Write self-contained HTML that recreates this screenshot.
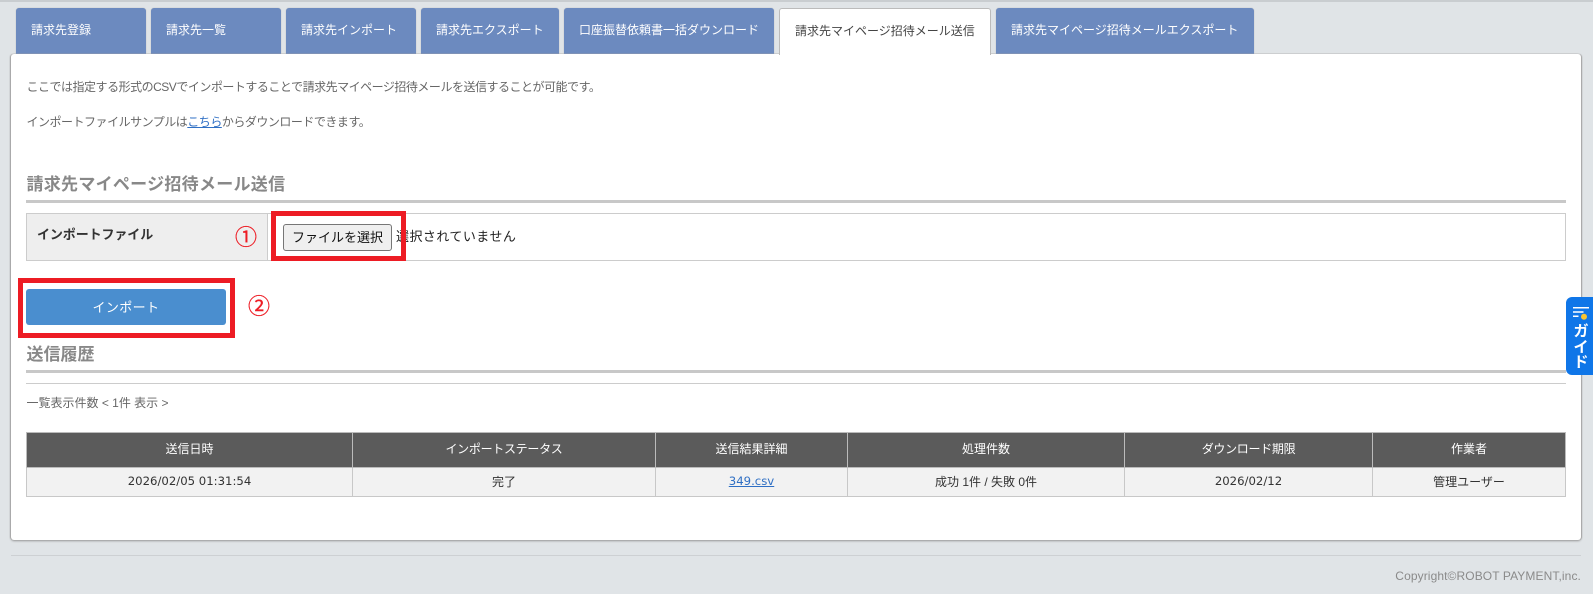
<!DOCTYPE html>
<html lang="ja"><head><meta charset="utf-8"><title>請求先マイページ招待メール送信</title>
<style>
*{box-sizing:border-box}
html,body{margin:0;padding:0;width:1593px;height:594px;overflow:hidden;background:#e0e4e7;font-family:"Liberation Sans","Noto Sans CJK JP",sans-serif;font-size:12px;color:#666}
.a{position:absolute;white-space:nowrap}
#top{left:0;top:0;width:1593px;height:2px;background:#c9cdd0}
.tab{position:absolute;top:8px;height:46px;background:#6c8abf;color:#fff;border-radius:3px 3px 0 0;padding:13.5px 0 0 15px;line-height:17px;white-space:nowrap;box-shadow:0 0 1px #aaa}
.tab.on{background:#fff;color:#444;height:47px;border:1px solid #bbb;border-bottom:0;padding:13.5px 0 0 15px;z-index:3;box-shadow:none}
#panel{left:11px;top:54px;width:1570px;height:486px;background:#fff;border-radius:3px;box-shadow:0 1px 2px 0 #999,-1px 0 1px 0 #aaa,1px 0 1px 0 #aaa;z-index:2}
.c{z-index:4}
.h{font-size:17px;font-weight:bold;color:#888;line-height:22px}
.rule{left:26px;width:1540px;height:3px;background:#c8c8c8}
.red{border:5px solid #ed1c24;z-index:5}
.num{color:#ed1c24;font-size:22px;line-height:26px;z-index:5;-webkit-text-stroke:.3px #ed1c24}
#cols{left:26px;top:432px;width:1539px;height:64px;border-collapse:collapse;table-layout:fixed}
#cols th{background:#5b5b5b;color:#fff;font-weight:normal;height:35px;border:1px solid #bbb;padding:0 0 3px;font-size:12px}
#cols th.k{letter-spacing:-.3px}
#cols td{background:#f2f2f2;color:#333;height:29px;border:1px solid #c8c8c8;padding:0 0 2px;text-align:center;font-size:12px}
#cols td.n{font-family:"DejaVu Sans","Noto Sans CJK JP",sans-serif;font-size:11.7px}
a{color:#2f6fc4}
#fb{left:283px;top:224px;width:109px;height:27px;background:#efefef;border:1px solid #767676;border-radius:3px;color:#111;font-size:13px;line-height:25px;text-align:center}
#guide{left:1566px;top:297px;width:27px;height:78px;background:#0f76e8;border-radius:6px 0 0 6px;z-index:6}
.g{left:1566px;width:30px;color:#fff;font-weight:bold;font-size:15px;line-height:16px;text-align:center;z-index:7}
</style></head><body>
<div class="a" id="top"></div>
<div class="tab" style="left:16px;width:130px">請求先登録</div>
<div class="tab" style="left:151px;width:130px">請求先一覧</div>
<div class="tab" style="left:286px;width:130px">請求先インポート</div>
<div class="tab" style="left:421px;width:138px">請求先エクスポート</div>
<div class="tab" style="left:564px;width:210px">口座振替依頼書一括ダウンロード</div>
<div class="tab on" style="left:779px;width:212px">請求先マイページ招待メール送信</div>
<div class="tab" style="left:996px;width:258px">請求先マイページ招待メールエクスポート</div>
<div class="a" id="panel"></div>

<div class="a c" style="left:26.5px;top:79px;line-height:17px;letter-spacing:-.49px">ここでは指定する形式のCSVでインポートすることで請求先マイページ招待メールを送信することが可能です。</div>
<div class="a c" style="left:26.5px;top:114px;line-height:17px;letter-spacing:-.49px">インポートファイルサンプルは<a href="#">こちら</a>からダウンロードできます。</div>

<div class="a c h" style="left:26.5px;top:174px;letter-spacing:.28px">請求先マイページ招待メール送信</div>
<div class="a c rule" style="top:200px"></div>

<div class="a c" style="left:26px;top:213px;width:1540px;height:48px;border:1px solid #ccc"></div>
<div class="a c" style="left:27px;top:214px;width:241px;height:46px;background:#eee;border-right:1px solid #ccc"></div>
<div class="a c" style="left:37px;top:226px;font-weight:bold;font-size:13px;color:#333;line-height:18px;letter-spacing:-.1px">インポートファイル</div>
<div class="a c" id="fb">ファイルを選択</div>
<div class="a c" style="left:396px;top:227px;font-size:13px;color:#222;line-height:20px;letter-spacing:.45px">選択されていません</div>
<div class="a red" style="left:271px;top:211px;width:135px;height:50px"></div>
<div class="a num" style="left:235px;top:225px">①</div>

<div class="a c" style="left:26px;top:289px;width:200px;height:36px;background:#4a8ecf;border-radius:3px;color:#fff;font-size:13px;line-height:37px;text-align:center;letter-spacing:.4px">インポート</div>
<div class="a red" style="left:18px;top:278px;width:217px;height:60px"></div>
<div class="a num" style="left:248px;top:294px">②</div>

<div class="a c h" style="left:26.5px;top:344px">送信履歴</div>
<div class="a c rule" style="top:370px"></div>
<div class="a c" style="left:26px;top:383px;width:1540px;height:1px;background:#ccc"></div>
<div class="a c" style="left:26.5px;top:395px;line-height:17px">一覧表示件数 &lt; 1件 表示 &gt;</div>

<table class="a c" id="cols">
<colgroup><col style="width:326px"><col style="width:303px"><col style="width:192px"><col style="width:277px"><col style="width:248px"><col style="width:193px"></colgroup>
<tr><th>送信日時</th><th class="k">インポートステータス</th><th>送信結果詳細</th><th>処理件数</th><th class="k">ダウンロード期限</th><th>作業者</th></tr>
<tr><td class="n">2026/02/05 01:31:54</td><td>完了</td><td class="n"><a href="#">349.csv</a></td><td>成功 1件 / 失敗 0件</td><td class="n">2026/02/12</td><td>管理ユーザー</td></tr>
</table>

<div class="a" style="left:11px;top:555px;width:1570px;height:1px;background:#cdd0d3"></div>
<div class="a" style="right:12px;top:568px;color:#8a8a8a;line-height:17px;letter-spacing:.1px">Copyright©ROBOT PAYMENT,inc.</div>

<div class="a" id="guide"></div>
<svg class="a" style="left:1566px;top:297px;z-index:7" width="27" height="28" viewBox="0 0 27 28">
<path d="M7 10.7h16M7 15h10.5M7 19.2h5.5" stroke="#fff" stroke-width="1.5" fill="none"/>
<circle cx="18" cy="19.7" r="3" fill="#f9c531"/>
</svg>
<div class="a g" style="top:324px">ガ</div>
<div class="a g" style="top:340px">イ</div>
<div class="a g" style="top:355px">ド</div>
</body></html>
